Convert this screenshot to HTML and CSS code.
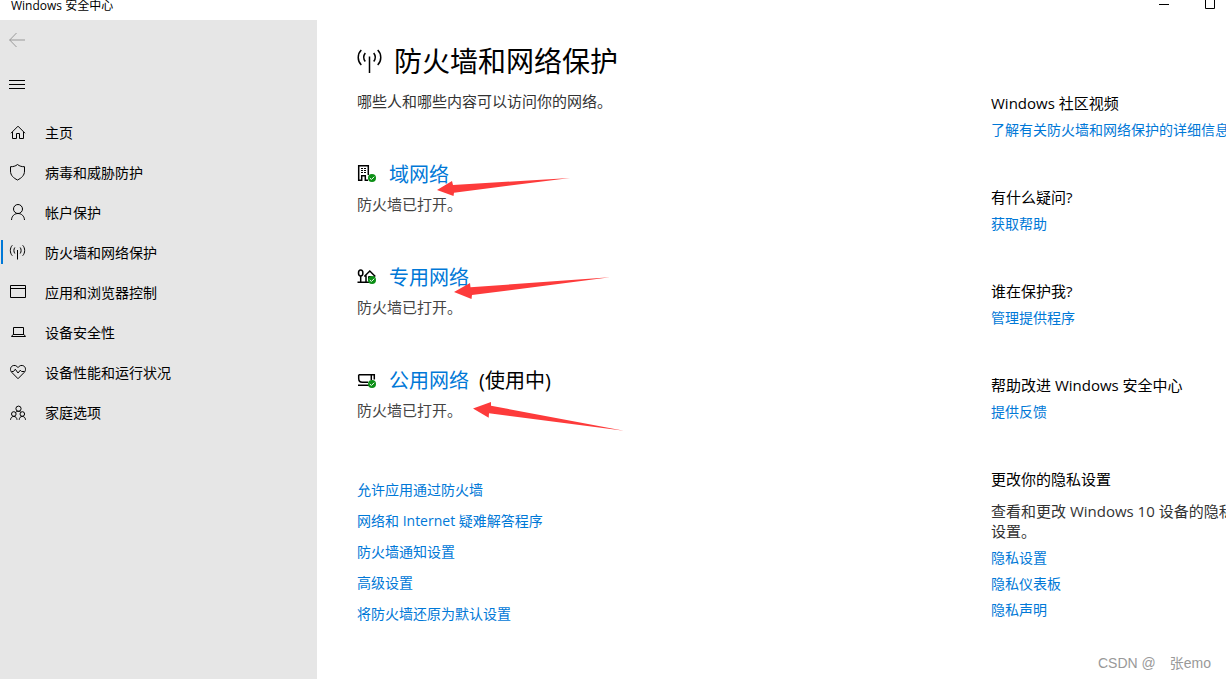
FILE: index.html
```html
<!DOCTYPE html>
<html lang="zh-CN">

<head>
    <meta charset="UTF-8">
    <meta name="viewport" content="width=device-width, initial-scale=1.0">
    <title>Windows 安全中心</title>
    <link rel="stylesheet" href="styles.css">
</head>

<body>
    <header class="titlebar">
        <span class="app-name">Windows 安全中心</span>
        <div class="window-buttons">
            <button type="button" aria-label="最小化">
                <svg width="10" height="10" viewBox="0 0 10 10"><path d="M0 5.5H10" /></svg>
            </button>
            <button type="button" aria-label="最大化">
                <svg width="10" height="10" viewBox="0 0 10 10"><path d="M.5 .5H9.5V9.5H.5Z" /></svg>
            </button>
        </div>
    </header>

    <div class="window">
        <aside class="sidebar">
            <button type="button" class="back" aria-label="返回">
                <svg width="18" height="18" viewBox="0 0 18 18"><path d="M.5 9H16M7.500 2L.7 9L7.500 16" /></svg>
            </button>
            <button type="button" class="menu" aria-label="菜单">
                <svg width="18" height="18" viewBox="0 0 18 18"><path d="M0 5.500H16M0 9.500H16M0 13.500H16" /></svg>
            </button>
            <nav class="nav">
                <a href="#home">
                    <svg width="18" height="18" viewBox="0 0 18 18"><path d="M2 9.200L9 2.200L16 9.200M3.500 8V14.500H7.500V9.500H10.500V14.500H14.500V8" /></svg>
                    主页
                </a>
                <a href="#virus">
                    <svg width="18" height="18" viewBox="0 0 18 18"><path d="M8.500 .5C6.500 2.200 4 2.800 1.500 2.700V7C1.500 11.500 4.500 14 8.500 16C12.500 14 15.500 11.500 15.500 7V2.700C13 2.800 10.500 2.200 8.500 .5Z" /></svg>
                    病毒和威胁防护
                </a>
                <a href="#account">
                    <svg width="18" height="18" viewBox="0 0 18 18"><circle cx="9" cy="5" r="4.500" /><path d="M2.500 16C2.700 12 5.500 9.500 9 9.500S15.300 12 15.500 16" /></svg>
                    帐户保护
                </a>
                <a href="#firewall" class="active">
                    <svg width="18" height="18" viewBox="0 0 18 18"><path d="M8.500 6V15.500M5.800 3.500C4.600 5.200 4.600 7.800 5.800 9.500M11.200 3.500C12.400 5.200 12.400 7.800 11.200 9.500M3.300 1.300C.7 4 .7 9 3.300 11.700M13.700 1.300C16.300 4 16.300 9 13.700 11.700" /></svg>
                    防火墙和网络保护
                </a>
                <a href="#apps">
                    <svg width="18" height="18" viewBox="0 0 18 18"><path d="M1.500 1.500H16.500V13.500H1.500ZM1.500 4.500H16.500" /></svg>
                    应用和浏览器控制
                </a>
                <a href="#device">
                    <svg width="18" height="18" viewBox="0 0 18 18"><path d="M4.500 10.500V3.500H14.500V10.500M4 10.500H15L16.500 12.500H2.500Z" /></svg>
                    设备安全性
                </a>
                <a href="#health">
                    <svg width="18" height="18" viewBox="0 0 18 18"><path d="M9 14.700L2.700 8.300C.8 6.200 1.300 3.200 3.200 2C5.200 .9 7.500 1.300 9 3.600C10.500 1.300 12.800 .9 14.800 2C16.700 3.200 17.200 6.200 15.300 8.300ZM2.500 7.500H4.500L6.300 5.200L9 9L11.300 6.200L12.600 7.500H15.500" /></svg>
                    设备性能和运行状况
                </a>
                <a href="#family">
                    <svg width="18" height="18" viewBox="0 0 18 18"><circle cx="9.500" cy="4.700" r="2.600" /><circle cx="4.800" cy="10" r="2.300" /><circle cx="13.300" cy="10" r="2.300" /><path d="M1.500 15.800C1.700 13.800 3 12.400 4.800 12.400S7.900 13.800 8 15.800M10.200 15.800C10.300 13.800 11.500 12.400 13.300 12.400S16.400 13.800 16.500 15.800M6.500 8.500C7.300 7.600 8.200 7.300 9.500 7.300S11.300 7.600 11.800 8.200" /></svg>
                    家庭选项
                </a>
            </nav>
        </aside>

        <main class="content">
            <h1>
                <svg width="25" height="26" viewBox="0 0 25 26"><path d="M12.500 8.500V25M8.300 5C6.400 7.500 6.400 11 8.300 13.500M16.700 5C18.600 7.500 18.600 11 16.700 13.500M4.300 2C.2 6 .2 13 4.300 17M20.700 2C24.800 6 24.800 13 20.700 17" /></svg>
                防火墙和网络保护
            </h1>
            <p class="intro">哪些人和哪些内容可以访问你的网络。</p>

            <section class="network">
                <h2>
                    <svg width="20" height="20" viewBox="0 0 20 20">
                        <path class="line" d="M1.700 16V.7H11.300V10M1 15.300H4.700V10.700H8.300V15.300H11" />
                        <path class="thin" d="M4 3.500H6M7 3.500H9M4 5.500H6M7 5.500H9M4 7.500H6M7 7.500H9" />
                        <circle class="ok" cx="15" cy="13" r="4" /><path class="tick" d="M12.800 13L14.400 14.500L17.200 11.700" />
                    </svg>
                    <a href="#domain">域网络</a>
                </h2>
                <p>防火墙已打开。</p>
                <svg class="arrow arrow-domain" width="134" height="20" viewBox="0 0 134 20"><path d="M0 12L15 3L16 7L133 0L17 14.700L16.500 18Z" /></svg>
            </section>

            <section class="network">
                <h2>
                    <svg width="20" height="20" viewBox="0 0 20 20">
                        <ellipse class="line" cx="3.700" cy="5" rx="2.200" ry="3" />
                        <path class="line" d="M3.700 8V14M.5 14.300H12M7.300 8.500L12.800 3L18.300 8.500M9 7.500V14" />
                        <path class="thin" d="M17 8V11M11.500 13V8.500H14.500V11" />
                        <circle class="ok" cx="15" cy="12" r="4" /><path class="tick" d="M12.800 12L14.400 13.500L17.200 10.700" />
                    </svg>
                    <a href="#private">专用网络</a>
                </h2>
                <p>防火墙已打开。</p>
                <svg class="arrow arrow-private" width="157" height="24" viewBox="0 0 157 24"><path d="M0 15L16 6L16.500 10.300L156 .3L18 18L17.500 22Z" /></svg>
            </section>

            <section class="network">
                <h2>
                    <svg width="20" height="20" viewBox="0 0 20 20">
                        <path class="line" d="M1.700 3.700H17.300V8.500M1.700 3.700V7.500C1.700 9.800 3 11.300 5.300 11.300H11M14.300 3.700V9M1 14.300H12" />
                        <circle class="ok" cx="15" cy="13" r="4" /><path class="tick" d="M12.800 13L14.400 14.500L17.200 11.700" />
                    </svg>
                    <a href="#public">公用网络</a>
                    <span>(使用中)</span>
                </h2>
                <p>防火墙已打开。</p>
                <svg class="arrow arrow-public" width="152" height="30" viewBox="0 0 152 30"><path d="M0 6.500L18 0L18 3.700L151 28.700L16 11.300L15.700 15.700Z" /></svg>
            </section>

            <div class="links">
                <a href="#allow">允许应用通过防火墙</a>
                <a href="#troubleshoot">网络和 Internet 疑难解答程序</a>
                <a href="#notify">防火墙通知设置</a>
                <a href="#advanced">高级设置</a>
                <a href="#restore">将防火墙还原为默认设置</a>
            </div>
        </main>

        <aside class="help">
            <section>
                <h3>Windows 社区视频</h3>
                <a href="#learn">了解有关防火墙和网络保护的详细信息</a>
            </section>
            <section>
                <h3>有什么疑问?</h3>
                <a href="#help">获取帮助</a>
            </section>
            <section>
                <h3>谁在保护我?</h3>
                <a href="#providers">管理提供程序</a>
            </section>
            <section>
                <h3>帮助改进 Windows 安全中心</h3>
                <a href="#feedback">提供反馈</a>
            </section>
            <section>
                <h3>更改你的隐私设置</h3>
                <p>查看和更改 Windows 10 设备的隐私设置。</p>
                <a href="#privacy">隐私设置</a>
                <a href="#dashboard">隐私仪表板</a>
                <a href="#statement">隐私声明</a>
            </section>
        </aside>
    </div>

    <div class="watermark">CSDN @　张emo</div>
</body>

</html>
```
FILE: styles.css
```css
* {
    box-sizing: border-box;
}

body {
    margin: 0;
    min-height: 100vh;
    display: flex;
    flex-direction: column;
    position: relative;
    overflow: hidden;
    background-color: #fff;
    color: #000;
    font-family: 'Open Sans', 'Noto Sans CJK SC', sans-serif;
    font-size: 14px;
}

h1,
h2,
h3,
p {
    margin: 0;
    font-weight: normal;
}

a {
    color: #0078d7;
    text-decoration: none;
}

a:hover {
    color: #666;
}

button {
    border: none;
    padding: 0;
    background: none;
}

svg {
    flex-shrink: 0;
    fill: none;
    stroke: #000;
}

/* Title bar */
.titlebar {
    display: flex;
    justify-content: space-between;
    height: 20px;
    padding-left: 11px;
}

.app-name {
    font-size: 12px;
    line-height: 11px;
}

.window-buttons {
    display: flex;
    margin-right: -7px;
}

.window-buttons button {
    display: flex;
    justify-content: center;
    width: 46px;
    height: 8px;
    margin-top: -1px;
}

.window {
    display: flex;
    flex: 1;
}

/* Sidebar */
.sidebar {
    flex: 0 0 317px;
    background-color: #e6e6e6;
}

.back,
.menu {
    display: flex;
    align-items: center;
    width: 48px;
    height: 40px;
    padding-left: 9px;
}

.back svg {
    stroke: #999;
}

.menu {
    margin-top: 4px;
}

.nav {
    margin-top: 9px;
}

.nav a {
    display: flex;
    align-items: center;
    gap: 18px;
    height: 40px;
    padding: 0 0 2px 9px;
    color: #000;
    position: relative;
}

.nav svg {
    margin-top: 2px;
}

.nav a.active::before {
    content: "";
    position: absolute;
    left: 1px;
    top: 7px;
    width: 2px;
    height: 24px;
    background-color: #0078d7;
}

/* Main column */
.content {
    flex: 1;
    padding: 21px 0 0 40px;
}

h1 {
    display: flex;
    align-items: center;
    gap: 12px;
    font-size: 28px;
    line-height: 40px;
}

h1 svg {
    stroke-width: 1.5;
}

.intro {
    margin-top: 10px;
    font-size: 15px;
    line-height: 20px;
    color: #333;
}

.network {
    position: relative;
    margin-top: 50px;
}

.network h2 {
    display: flex;
    align-items: center;
    font-size: 20px;
    line-height: 28px;
}

.network h2 a {
    margin-left: 12px;
}

.network h2 span {
    margin-left: 10px;
}

.network p {
    margin-top: 5px;
    font-size: 15px;
    line-height: 20px;
    color: #444;
}

.network .line {
    stroke-width: 1.5;
}

.network .ok {
    fill: #0c8f16;
    stroke: none;
}

.network .tick {
    stroke: #fff;
}

/* Red pointers drawn over the networks */
.network .arrow {
    position: absolute;
    fill: #fd3b3b;
    stroke: none;
}

.arrow-domain {
    left: 80px;
    top: 17px;
}

.arrow-private {
    left: 97px;
    top: 13px;
}

.arrow-public {
    left: 116px;
    top: 35px;
}

.links {
    display: flex;
    flex-direction: column;
    align-items: flex-start;
    margin-top: 54px;
    line-height: 31px;
}

/* Help column, runs past the right edge on narrow windows */
.help {
    flex: 0 0 235px;
    min-width: 0;
    display: flex;
    flex-direction: column;
    gap: 44px;
    padding-top: 73px;
    white-space: nowrap;
}

.help h3 {
    margin-bottom: 4px;
    font-size: 15px;
    line-height: 20px;
}

.help a {
    display: block;
    line-height: 26px;
}

.help p {
    width: 250px;
    margin: 12px 0 4px;
    font-size: 15px;
    line-height: 20px;
    color: #333;
    white-space: normal;
}

.watermark {
    position: absolute;
    right: 15px;
    bottom: 6px;
    font-family: 'Liberation Sans', 'Noto Sans CJK SC', sans-serif;
    font-size: 14px;
    line-height: 20px;
    color: #999;
}
```
